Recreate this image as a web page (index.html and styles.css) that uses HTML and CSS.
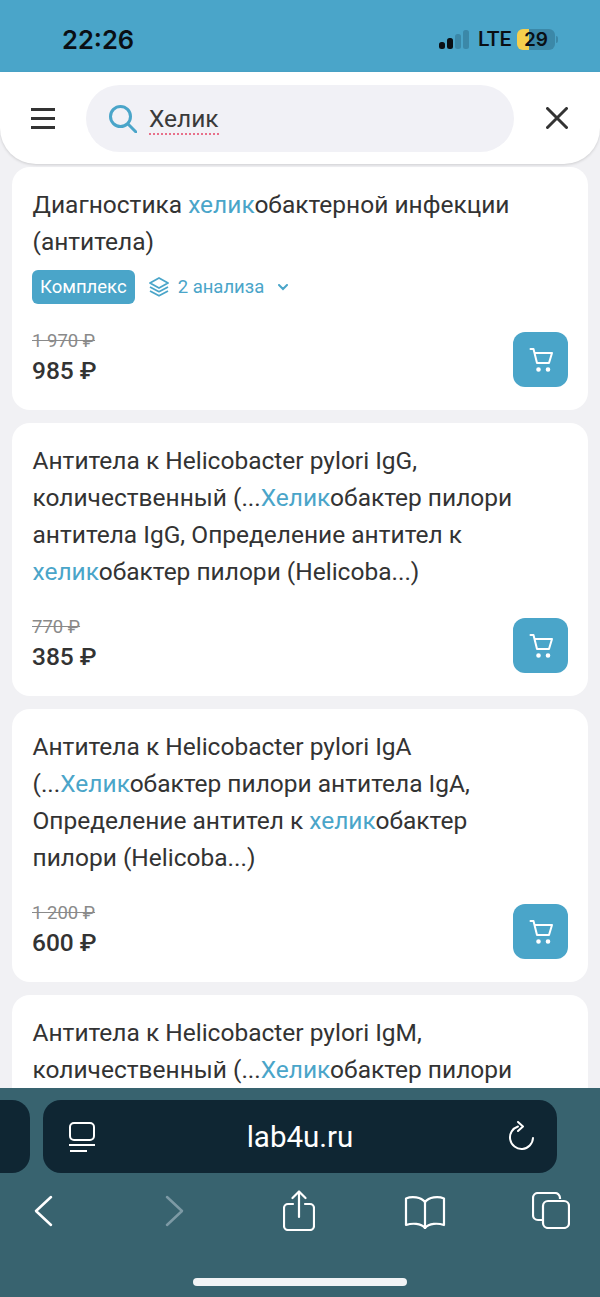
FILE: index.html
```html
<!DOCTYPE html>
<html lang="ru">
<head>
  <meta charset="UTF-8" />
  <meta name="viewport" content="width=device-width, initial-scale=1.0"/>
  <title>Поиск</title>
  <link rel="stylesheet" href="styles.css">
</head>
<body>
  <div class="status-bar">
    <span class="time">22:26</span>
    <div class="status-right">
      <svg class="signal" width="30" height="19" viewBox="0 0 30 19">
        <rect x="0" y="12" width="6" height="7" rx="2.5" fill="#0a0f14"/>
        <rect x="8" y="8" width="6" height="11" rx="2.5" fill="#0a0f14"/>
        <rect x="16" y="4" width="6" height="15" rx="2.5" fill="#3b88a8"/>
        <rect x="24" y="0" width="6" height="19" rx="2.5" fill="#3b88a8"/>
      </svg>
      <span class="lte">LTE</span>
      <div class="battery"><span class="battery-num">29</span></div>
    </div>
  </div>

  <header class="search-header">
    <svg class="menu-icon" width="24" height="21" viewBox="0 0 24 21">
      <path d="M0 1.5h24M0 10.5h24M0 19.5h24" stroke="#333" stroke-width="3"/>
    </svg>
    <div class="search-box">
      <svg width="28" height="28" viewBox="0 0 28 28" fill="none" stroke="#4aa5c9" stroke-width="3">
        <circle cx="11.5" cy="11.5" r="10"/>
        <path d="M19 19l8 8" stroke-linecap="round"/>
      </svg>
      <span class="search-text">Хелик</span>
    </div>
    <svg class="close-icon" width="22" height="22" viewBox="0 0 22 22">
      <path d="M1.5 1.5l19 19M20.5 1.5l-19 19" stroke="#333" stroke-width="3" stroke-linecap="round"/>
    </svg>
  </header>

  <main class="results">
    <div class="card">
      <div class="card-title">Диагностика <em>хелик</em>обактерной инфекции (антитела)</div>
      <div class="tags">
        <span class="tag">Комплекс</span>
        <svg width="20" height="20" viewBox="0 0 20 20" fill="none" stroke="#4aa5c9" stroke-width="1.8" stroke-linejoin="round">
          <path d="M10 1l9 5-9 5-9-5z"/>
          <path d="M1 10l9 4.700 9-4.700"/>
          <path d="M1 14l9 4.800 9-4.800"/>
        </svg>
        <span class="tag-link">2 анализа</span>
        <svg class="tag-arrow" width="10" height="7" viewBox="0 0 10 7">
          <path d="M1 1l4 4 4-4" fill="none" stroke="#4aa5c9" stroke-width="2" stroke-linecap="round"/>
        </svg>
      </div>
      <div class="card-bottom">
        <div class="prices">
          <div class="old-price">1 970 ₽</div>
          <div class="new-price">985 ₽</div>
        </div>
        <button class="cart-btn">
          <svg width="26" height="26" viewBox="0 0 26 26" fill="none" stroke="#fff" stroke-width="2" stroke-linecap="round" stroke-linejoin="round">
            <path d="M2.500 2h3l3.500 14h12l3-10H6.500"/>
            <circle cx="10.500" cy="22.500" r="1.300" fill="#fff"/>
            <circle cx="20" cy="22.500" r="1.300" fill="#fff"/>
          </svg>
        </button>
      </div>
    </div>

    <div class="card">
      <div class="card-title">Антитела к Helicobacter pylori IgG, количественный (...<em>Хелик</em>обактер пилори антитела IgG, Определение антител к <em>хелик</em>обактер пилори (Helicoba...)</div>
      <div class="card-bottom">
        <div class="prices">
          <div class="old-price">770 ₽</div>
          <div class="new-price">385 ₽</div>
        </div>
        <button class="cart-btn">
          <svg width="26" height="26" viewBox="0 0 26 26" fill="none" stroke="#fff" stroke-width="2" stroke-linecap="round" stroke-linejoin="round">
            <path d="M2.500 2h3l3.500 14h12l3-10H6.500"/>
            <circle cx="10.500" cy="22.500" r="1.300" fill="#fff"/>
            <circle cx="20" cy="22.500" r="1.300" fill="#fff"/>
          </svg>
        </button>
      </div>
    </div>

    <div class="card">
      <div class="card-title">Антитела к Helicobacter pylori IgA (...<em>Хелик</em>обактер пилори антитела IgA, Определение антител к <em>хелик</em>обактер пилори (Helicoba...)</div>
      <div class="card-bottom">
        <div class="prices">
          <div class="old-price">1 200 ₽</div>
          <div class="new-price">600 ₽</div>
        </div>
        <button class="cart-btn">
          <svg width="26" height="26" viewBox="0 0 26 26" fill="none" stroke="#fff" stroke-width="2" stroke-linecap="round" stroke-linejoin="round">
            <path d="M2.500 2h3l3.500 14h12l3-10H6.500"/>
            <circle cx="10.500" cy="22.500" r="1.300" fill="#fff"/>
            <circle cx="20" cy="22.500" r="1.300" fill="#fff"/>
          </svg>
        </button>
      </div>
    </div>

    <div class="card">
      <div class="card-title">Антитела к Helicobacter pylori IgM, количественный (...<em>Хелик</em>обактер пилори</div>
    </div>
  </main>

  <div class="browser-bar">
    <div class="url-row">
      <div class="prev-tab"></div>
      <div class="url-box">
        <svg width="26" height="30" viewBox="0 0 26 30" fill="none" stroke="#fff" stroke-width="2">
          <rect x="1" y="1" width="24" height="17" rx="4"/>
          <path d="M0 23h26M1 29h17"/>
        </svg>
        <span class="url-text">lab4u.ru</span>
        <svg width="26" height="32" viewBox="0 0 26 32" fill="none" stroke="#fff" stroke-width="2" stroke-linecap="round" stroke-linejoin="round">
          <path d="M9 5.500A11.500 11.500 0 1 0 24 17"/>
          <path d="M9 1l5 4.500-5 4.500"/>
        </svg>
      </div>
    </div>
    <div class="toolbar">
      <svg class="tool-back" width="19" height="32" viewBox="0 0 19 32" fill="none" stroke="#fff" stroke-width="2.500" stroke-linecap="round" stroke-linejoin="round">
        <path d="M17 2L2 16l15 14"/>
      </svg>
      <svg class="tool-forward" width="19" height="32" viewBox="0 0 19 32" fill="none" stroke="#7d9aa5" stroke-width="2.500" stroke-linecap="round" stroke-linejoin="round">
        <path d="M2 2l15 14L2 30"/>
      </svg>
      <svg class="tool-share" width="32" height="41" viewBox="0 0 32 41" fill="none" stroke="#fff" stroke-width="2.200" stroke-linecap="round" stroke-linejoin="round">
        <path d="M10 14H5a4 4 0 0 0-4 4v18a4 4 0 0 0 4 4h22a4 4 0 0 0 4-4V18a4 4 0 0 0-4-4h-5"/>
        <path d="M16 27V2M9.500 8L16 1.500 22.500 8"/>
      </svg>
      <svg class="tool-book" width="42" height="33" viewBox="0 0 42 33" fill="none" stroke="#fff" stroke-width="2.200" stroke-linecap="round" stroke-linejoin="round">
        <path d="M21 6C17 1 8 0 2 2.500V29c6-2 15-2 19 3 4-5 13-5 19-3V2.500C34 0 25 1 21 6z"/>
        <path d="M21 6v26"/>
      </svg>
      <svg class="tool-tabs" width="38" height="37" viewBox="0 0 38 37" fill="none" stroke="#fff" stroke-width="2.200">
        <path d="M28 7V6a5 5 0 0 0-5-5H6a5 5 0 0 0-5 5v17a5 5 0 0 0 5 5h4"/>
        <rect x="11" y="9" width="26" height="27" rx="5"/>
      </svg>
    </div>
    <div class="home-indicator"></div>
  </div>
</body>
</html>
```

FILE: styles.css
```css
* {
  box-sizing: border-box;
}

html, body {
  height: 100%;
}

body {
  margin: 0;
  font-family: Roboto, sans-serif;
  color: #333;
  background: #f1f1f4;
  display: flex;
  flex-direction: column;
  overflow: hidden;
}

.status-bar {
  height: 72px;
  flex: none;
  background: #4aa5c9;
  display: flex;
  align-items: center;
  justify-content: space-between;
  padding: 6px 45px 0 62px;
  color: #0a0f14;
}

.time {
  font-family: Inter, sans-serif;
  font-size: 25.500px;
  font-weight: 600;
}

.status-right {
  display: flex;
  align-items: center;
  gap: 9px;
}

.lte {
  font-size: 21px;
  font-weight: 500;
  width: 30px;
}

.battery {
  width: 38px;
  height: 21px;
  border-radius: 6px;
  background: linear-gradient(90deg, #f5cf4d 12px, #3b88a8 12px);
  position: relative;
  text-align: center;
}

.battery::after {
  content: "";
  position: absolute;
  right: -3px;
  top: 7px;
  width: 2px;
  height: 7px;
  border-radius: 0 2px 2px 0;
  background: #3b88a8;
}

.battery-num {
  font-family: Inter, sans-serif;
  font-size: 19px;
  font-weight: 600;
  line-height: 21px;
}

.search-header {
  height: 92px;
  flex: none;
  background: #fff;
  border-radius: 0 0 36px 36px;
  box-shadow: 0 1px 3px rgba(0,0,0,0.15);
  display: flex;
  align-items: center;
  padding: 0 32px 0 31px;
  position: relative;
  z-index: 1;
}

.search-box {
  width: 428px;
  height: 67px;
  margin: 1px 32px 0 31px;
  border-radius: 34px;
  background: #f1f1f6;
  display: flex;
  align-items: center;
  gap: 12px;
  padding: 0 0 0 23px;
}

.search-text {
  font-size: 24.500px;
  line-height: 28px;
  color: #3a3a3a;
  border-bottom: 2px dotted #e8708a;
  margin-top: 3px;
}

.results {
  flex: 1;
  min-height: 0;
  overflow: hidden;
  padding: 3px 12px 0;
  display: flex;
  flex-direction: column;
  gap: 13px;
}

.card {
  flex: none;
  background: #fff;
  border-radius: 18px;
  padding: 19px 20px 23px;
}

.card-title {
  font-size: 24.500px;
  line-height: 37px;
  color: #333;
  padding: 0 20px 0 0.5px;
}

.card-title em {
  font-style: normal;
  color: #4aa5c9;
}

.tags {
  display: flex;
  align-items: center;
  margin-top: 10px;
}

.tag {
  height: 34px;
  line-height: 34px;
  padding: 0 8px;
  margin-right: 14px;
  border-radius: 6px;
  background: #4aa5c9;
  color: #fff;
  font-size: 18.500px;
}

.tag-link {
  margin-left: 9px;
  font-size: 18.500px;
  color: #4aa5c9;
}

.tag-arrow {
  margin-left: 14px;
}

.card-bottom {
  display: flex;
  justify-content: space-between;
  align-items: flex-start;
  height: 55px;
  margin-top: 28px;
}

.prices {
  margin-top: -2px;
}

.old-price {
  font-size: 18.500px;
  line-height: 22px;
  color: #8a8a8a;
  text-decoration: line-through;
}

.new-price {
  margin-top: 4px;
  font-size: 24.500px;
  line-height: 30px;
  font-weight: 500;
  color: #333;
}

.cart-btn {
  width: 55px;
  height: 55px;
  border: none;
  border-radius: 12px;
  background: #4aa5c9;
  display: flex;
  align-items: center;
  justify-content: center;
  padding: 0;
}

.browser-bar {
  height: 209px;
  flex: none;
  background: #38636f;
  position: relative;
  z-index: 2;
  padding-top: 12px;
}

.url-row {
  display: flex;
  gap: 13px;
}

.prev-tab {
  width: 30px;
  height: 73px;
  background: #0f2633;
  border-radius: 0 18px 18px 0;
}

.url-box {
  width: 514px;
  height: 73px;
  background: #0f2633;
  border-radius: 18px;
  display: flex;
  align-items: center;
  padding: 0 22px 0 26px;
}

.url-text {
  flex: 1;
  margin-right: 4px;
  text-align: center;
  font-size: 29.500px;
  color: #fff;
}

.toolbar {
  display: flex;
  align-items: flex-start;
  height: 105px;
  padding: 17px 0 0 34px;
}

.tool-back {
  margin-top: 5px;
}

.tool-forward {
  margin: 5px 0 0 112px;
}

.tool-share {
  margin-left: 99px;
}

.tool-book {
  margin: 6px 0 0 89px;
}

.tool-tabs {
  margin: 2px 0 0 86px;
}

.home-indicator {
  width: 214px;
  height: 8px;
  margin: 0 auto;
  border-radius: 4px;
  background: #f1f3f5;
}
```
